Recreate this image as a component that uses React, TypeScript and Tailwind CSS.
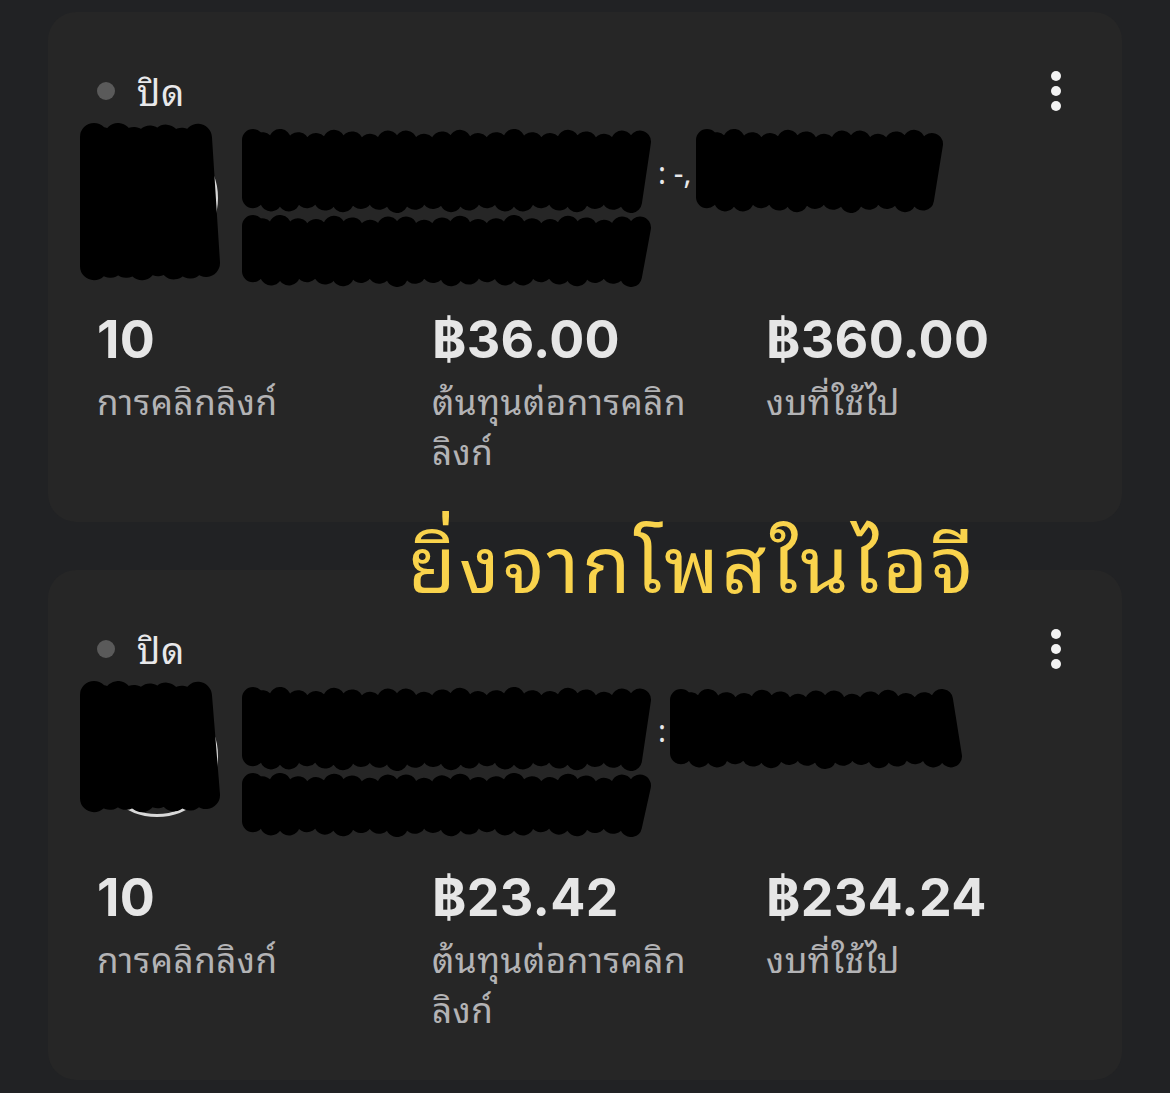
import React from 'react';

type Stat = { value: string; label: string };

// zigzag scribble like the marker redactions in the screenshot
function Scribble({ w, h, step = 9, stroke = 22 }: { w: number; h: number; step?: number; stroke?: number }) {
  const pad = stroke / 2;
  let d = `M ${pad} ${pad}`;
  let up = false;
  for (let x = pad; x <= w - pad; x += step) {
    const jitter = ((x * 7) % 13) - 6;
    const y = up ? pad + Math.abs(jitter) * 0.8 : h - pad - Math.abs(jitter) * 0.8;
    d += ` L ${x} ${y}`;
    up = !up;
  }
  return (
    <svg width={w} height={h} className="block shrink-0">
      <path d={d} fill="none" stroke="#000" strokeWidth={stroke} strokeLinecap="round" strokeLinejoin="round" />
    </svg>
  );
}

function Kebab() {
  return (
    <div className="flex w-[34px] flex-col items-center gap-[5px]">
      <span className="h-[10px] w-[10px] rounded-full bg-[#f2f2f2]" />
      <span className="h-[10px] w-[10px] rounded-full bg-[#f2f2f2]" />
      <span className="h-[10px] w-[10px] rounded-full bg-[#f2f2f2]" />
    </div>
  );
}

function AdCard({ stats, first }: { stats: Stat[]; first?: boolean }) {
  return (
    <div className="h-[510px] rounded-[28px] bg-[#262626] pl-[49px] pr-[49px] pt-[61px]">
      {/* status row */}
      <div className="flex h-[36px] items-center justify-between">
        <div className="flex items-center gap-[22px]">
          <span className="h-[18px] w-[18px] rounded-full bg-[#5a5a5a]" />
          <span className="-mt-[3px] text-[36px] leading-none tracking-[1px] text-[#e8e8ea]">ปิด</span>
        </div>
        <Kebab />
      </div>

      {/* redacted creative + name */}
      <div className="ml-[-17px] mt-[14px] flex h-[163px] items-start gap-[20px]">
        <div className="relative h-[160px] w-[142px] shrink-0">
          <div className="absolute left-[16px] top-[14px] h-[122px] w-[122px] rounded-full border-[3px] border-[#d8d8d8]" />
          <div className="absolute inset-0">
            <Scribble w={142} h={first ? 158 : 132} step={8} stroke={28} />
          </div>
        </div>
        <div className="flex flex-col gap-[2px] pt-[6px]">
          <div className="flex items-center">
            <Scribble w={412} h={84} step={9} />
            <span className="px-[4px] text-[30px] leading-none text-[#e8e8ea]">{first ? ': -,' : ':'}</span>
            {first ? <Scribble w={250} h={84} step={9} /> : <Scribble w={300} h={80} step={9} />}
          </div>
          <Scribble w={410} h={first ? 72 : 64} step={9} />
        </div>
      </div>

      {/* stats */}
      <div className="mt-[24px] grid grid-cols-[335px_334px_1fr]">
        {stats.map((s) => (
          <div key={s.label} className="flex flex-col">
            <span className="font-['Inter'] text-[52px] font-bold leading-[60px] tracking-[0.3px] text-[#e6e6e6]">{s.value}</span>
            <span className="mt-[4px] w-[290px] text-[35px] leading-[50px] tracking-[0.5px] text-[#b3b3b5]">{s.label}</span>
          </div>
        ))}
      </div>
    </div>
  );
}

export default function App() {
  const first: Stat[] = [
    { value: '10', label: 'การคลิกลิงก์' },
    { value: '฿36.00', label: 'ต้นทุนต่อการคลิกลิงก์' },
    { value: '฿360.00', label: 'งบที่ใช้ไป' },
  ];
  const second: Stat[] = [
    { value: '10', label: 'การคลิกลิงก์' },
    { value: '฿23.42', label: 'ต้นทุนต่อการคลิกลิงก์' },
    { value: '฿234.24', label: 'งบที่ใช้ไป' },
  ];

  return (
    <div className="relative min-h-[1093px] w-[1170px] bg-[#212224] px-[48px] pt-[12px] font-['Noto_Sans_Thai_Looped','Noto_Serif_Thai','Loma','Garuda','Tlwg_Typo','Noto_Sans',sans-serif]">
      <div className="flex flex-col gap-[48px]">
        <AdCard stats={first} first />
        <AdCard stats={second} />
      </div>
      {/* yellow caption laid over the cards */}
      <div className="absolute left-[408px] top-[513px] text-[78px] leading-[90px] tracking-[3px] text-[#f9d34c]">ยิ่งจากโพสในไอจี</div>
    </div>
  );
}
